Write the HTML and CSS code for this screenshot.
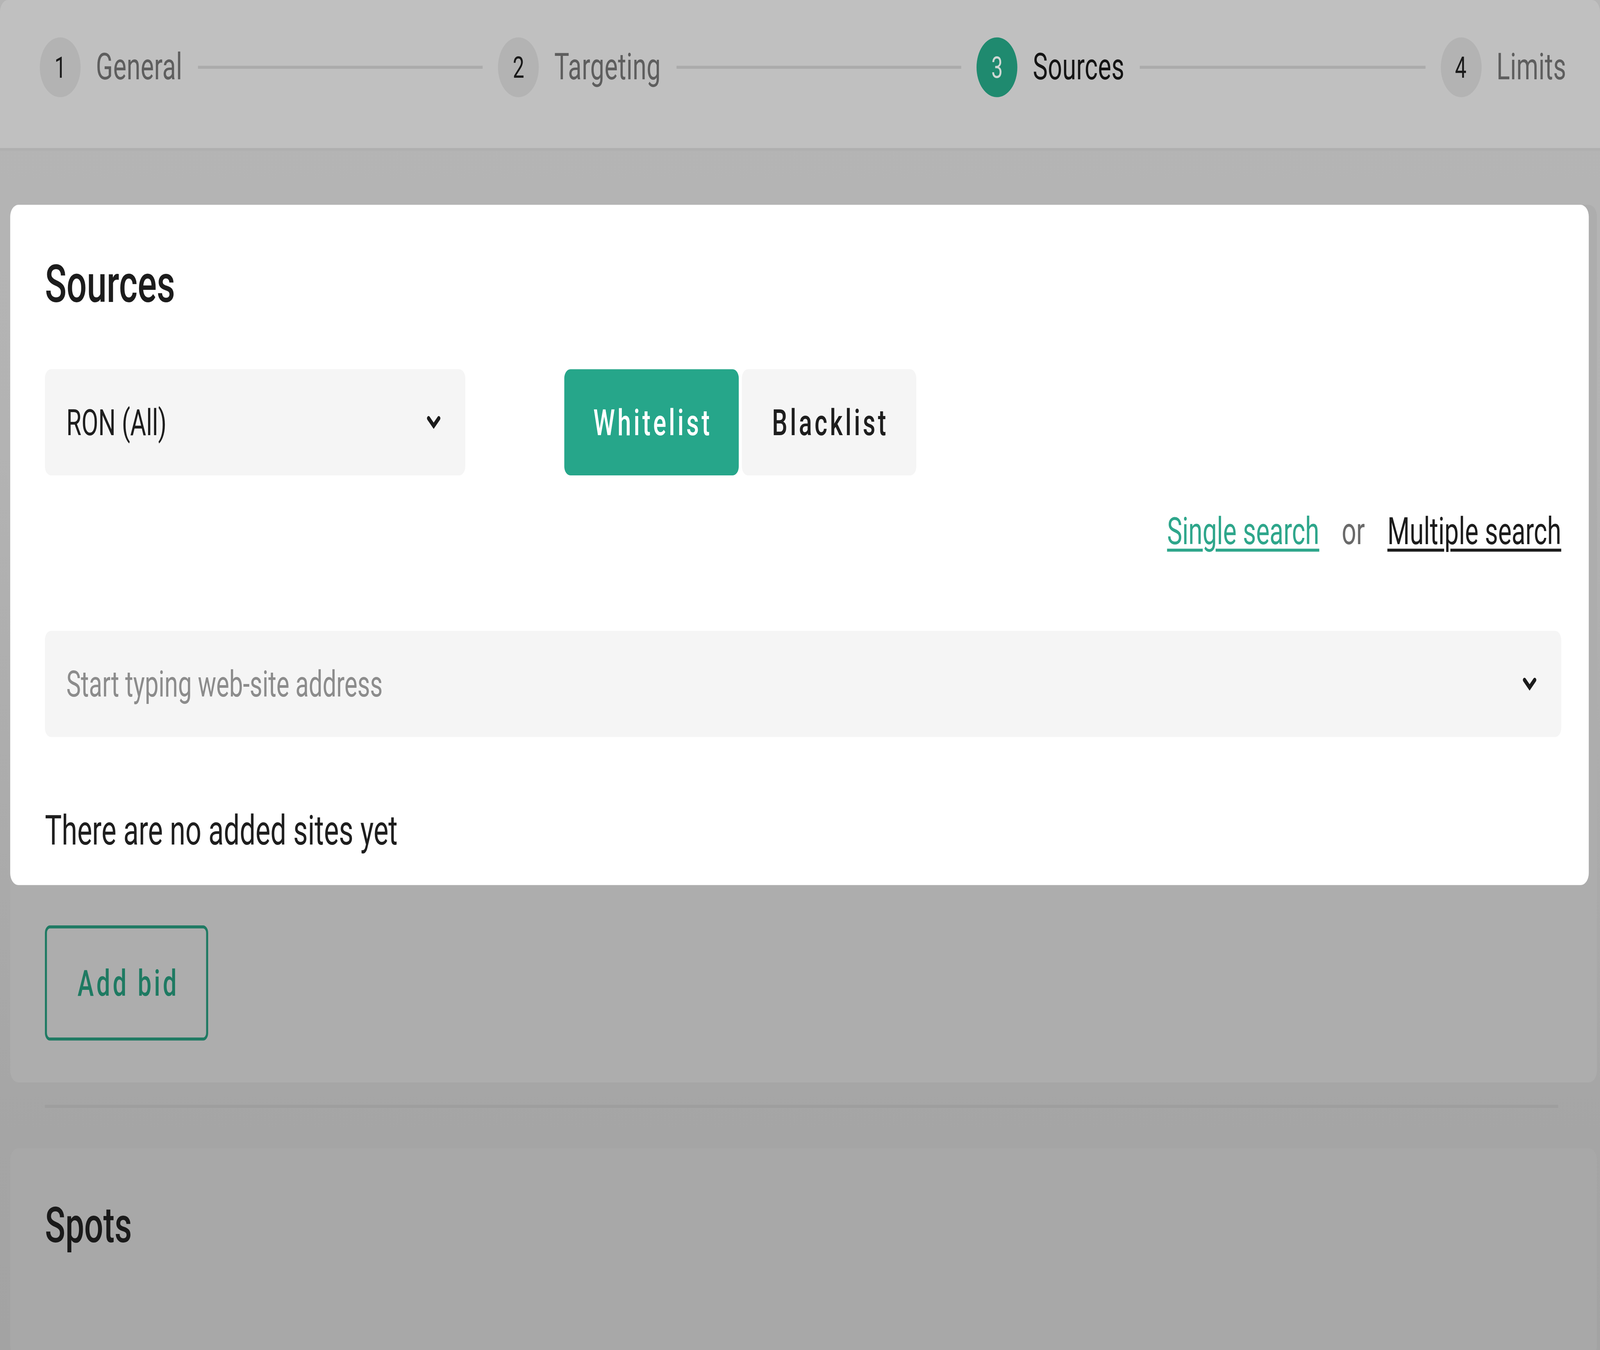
FILE: index.html
```html
<!DOCTYPE html>
<html lang="en">
<head>
<meta charset="utf-8">
<title>Campaign – Sources</title>
<link rel="stylesheet" href="styles.css">
</head>
<body>
<div class="page">
  <header class="stepper">
    <div class="step">
      <span class="step-num">1</span>
      <span class="step-label">General</span>
    </div>
    <span class="step-line"></span>
    <div class="step">
      <span class="step-num">2</span>
      <span class="step-label">Targeting</span>
    </div>
    <span class="step-line"></span>
    <div class="step step-active">
      <span class="step-num">3</span>
      <span class="step-label">Sources</span>
    </div>
    <span class="step-line"></span>
    <div class="step">
      <span class="step-num">4</span>
      <span class="step-label">Limits</span>
    </div>
  </header>

  <main class="content">
    <section class="card card-sources">
      <div class="spotlight">
        <h2 class="card-title">Sources</h2>
        <div class="controls-row">
          <div class="select select-ron">
            <span class="select-value">RON (All)</span>
            <svg class="chevron" width="14" height="9" viewBox="0 0 14 9"><path d="M2 1.8 L7 6.8 L12 1.8" fill="none" stroke="#1b1b1b" stroke-width="3" stroke-linecap="round" stroke-linejoin="miter"/></svg>
          </div>
          <div class="toggle">
            <button class="toggle-btn toggle-on">Whitelist</button>
            <button class="toggle-btn">Blacklist</button>
          </div>
        </div>
        <div class="search-mode">
          <a class="link link-green" href="#">Single search</a>
          <span class="or">or</span>
          <a class="link link-dark" href="#">Multiple search</a>
        </div>
        <div class="select select-search">
          <span class="placeholder">Start typing web-site address</span>
          <svg class="chevron" width="14" height="9" viewBox="0 0 14 9"><path d="M2 1.8 L7 6.8 L12 1.8" fill="none" stroke="#1b1b1b" stroke-width="3" stroke-linecap="round" stroke-linejoin="miter"/></svg>
        </div>
        <p class="empty">There are no added sites yet</p>
      </div>
      <div class="card-footer">
        <button class="btn-outline">Add bid</button>
      </div>
    </section>

    <hr class="divider">

    <section class="card card-spots">
      <h2 class="card-title card-title-spots">Spots</h2>
    </section>
  </main>
</div>
<script src="app.js"></script>
</body>
</html>
```

FILE: styles.css
```css
:root {
  --sx: 2.61224;
  --sy: 3.82724;
}

html, body {
  margin: 0;
  padding: 0;
  width: 100%;
  height: 100%;
}

html {
  background: #a3a3a3;
}

body {
  font-family: Roboto, "Liberation Sans", Arial, sans-serif;
  color: #1c1c1c;
  overflow: hidden;
  min-height: 100vh;
}

/* design canvas: 1568 x 903, fitted to the window */
.page {
  width: 1568px;
  height: 903px;
  overflow: hidden;
  transform-origin: 0 0;
  transform: scale(var(--sx), var(--sy));
  background: linear-gradient(#b5b5b5 0px, #b3b3b3 300px, #a5a5a5 760px, #a3a3a3 903px);
}

/* ---------- stepper ---------- */
.stepper {
  height: 101px;
  box-sizing: border-box;
  display: flex;
  align-items: center;
  padding: 0 33px 10px 39px;
  background: #c0c0c0;
  border-bottom: 2px solid #b0b0b0;
  border-radius: 8px 8px 0 0;
}

.step {
  display: flex;
  align-items: center;
  flex: none;
}

.step-num {
  width: 40px;
  height: 40px;
  border-radius: 50%;
  background: #b3b3b3;
  color: #1a1a1a;
  font-size: 20px;
  display: flex;
  align-items: center;
  justify-content: center;
}

.step-label {
  margin-left: 15px;
  font-size: 24.5px;
  color: #5e5e5e;
  letter-spacing: 0.2px;
}

.step-active .step-num {
  background: #1f8a6f;
  color: #cfd8d4;
}

.step-active .step-label {
  color: #141414;
}

.step-line {
  flex: 1;
  height: 2px;
  background: #ababab;
  margin: 0 15px;
}

/* ---------- content ---------- */
.content {
  padding: 36px 3px 0 10px;
}

.card {
  border-radius: 8px;
}

.card-sources {
  background: #adadad;
}

.spotlight {
  background: #ffffff;
  border-radius: 8px;
  margin-right: 8px;
  padding: 34px 27px 20px 34px;
}

.card-title {
  margin: 0;
  font-size: 35px;
  line-height: 40px;
  font-weight: 500;
  color: #1c1c1c;
}

.controls-row {
  margin-top: 36px;
  display: flex;
  align-items: stretch;
  height: 71px;
}

.select {
  background: #f5f5f5;
  border-radius: 6px;
  display: flex;
  align-items: center;
  justify-content: space-between;
  box-sizing: border-box;
  padding: 0 24px 0 21px;
}

.select-ron {
  width: 412px;
}

.select-value {
  font-size: 24px;
  color: #1e1e1e;
}

.toggle {
  margin-left: 97px;
  display: flex;
  gap: 3px;
}

.toggle-btn {
  width: 171px;
  border: none;
  border-radius: 6px;
  background: #f5f5f5;
  color: #1e1e1e;
  font-family: inherit;
  font-size: 24px;
  font-weight: 500;
  letter-spacing: 2.5px;
  padding: 0 0 0 2.5px;
}

.toggle-on {
  background: #26a68a;
  color: #ffffff;
}

.search-mode {
  margin-top: 24px;
  display: flex;
  justify-content: flex-end;
  align-items: center;
  gap: 22px;
  font-size: 25px;
  line-height: 28px;
}

.link {
  text-decoration: underline;
  text-decoration-thickness: 2px;
  text-underline-offset: 3px;
}

.link-green {
  color: #2ea68b;
}

.link-dark {
  color: #1c1c1c;
}

.or {
  color: #6a6a6a;
}

.select-search {
  margin-top: 52px;
  height: 71px;
  padding-right: 24px;
}

.placeholder {
  font-size: 24px;
  color: #8c8c8c;
}

.chevron {
  display: block;
  flex: none;
}

.empty {
  margin: 47px 0 0;
  font-size: 27.6px;
  line-height: 32px;
  color: #1e1e1e;
}

.card-footer {
  padding: 27px 34px 28px;
}

.btn-outline {
  height: 77px;
  box-sizing: border-box;
  border: 2px solid #1f7a63;
  border-radius: 5px;
  background: transparent;
  color: #1e7a62;
  font-family: inherit;
  font-size: 24px;
  font-weight: 500;
  letter-spacing: 2.5px;
  padding: 0 26px 0 30px;
}

.divider {
  margin: 15px 38px 0 34px;
  border: none;
  height: 2px;
  background: #9e9e9e;
}

.card-spots {
  margin-top: 27px;
  background: #a8a8a8;
  height: 140px;
  padding: 32px 34px 0;
  box-sizing: border-box;
}

.card-title-spots {
  font-size: 33px;
  color: #1a1a1a;
}
```

FILE: app.js
```js
(function () {
  var root = document.documentElement;
  function fit() {
    root.style.setProperty('--sx', window.innerWidth / 1568);
    root.style.setProperty('--sy', window.innerHeight / 903);
  }
  fit();
  window.addEventListener('resize', fit);
})();
```
